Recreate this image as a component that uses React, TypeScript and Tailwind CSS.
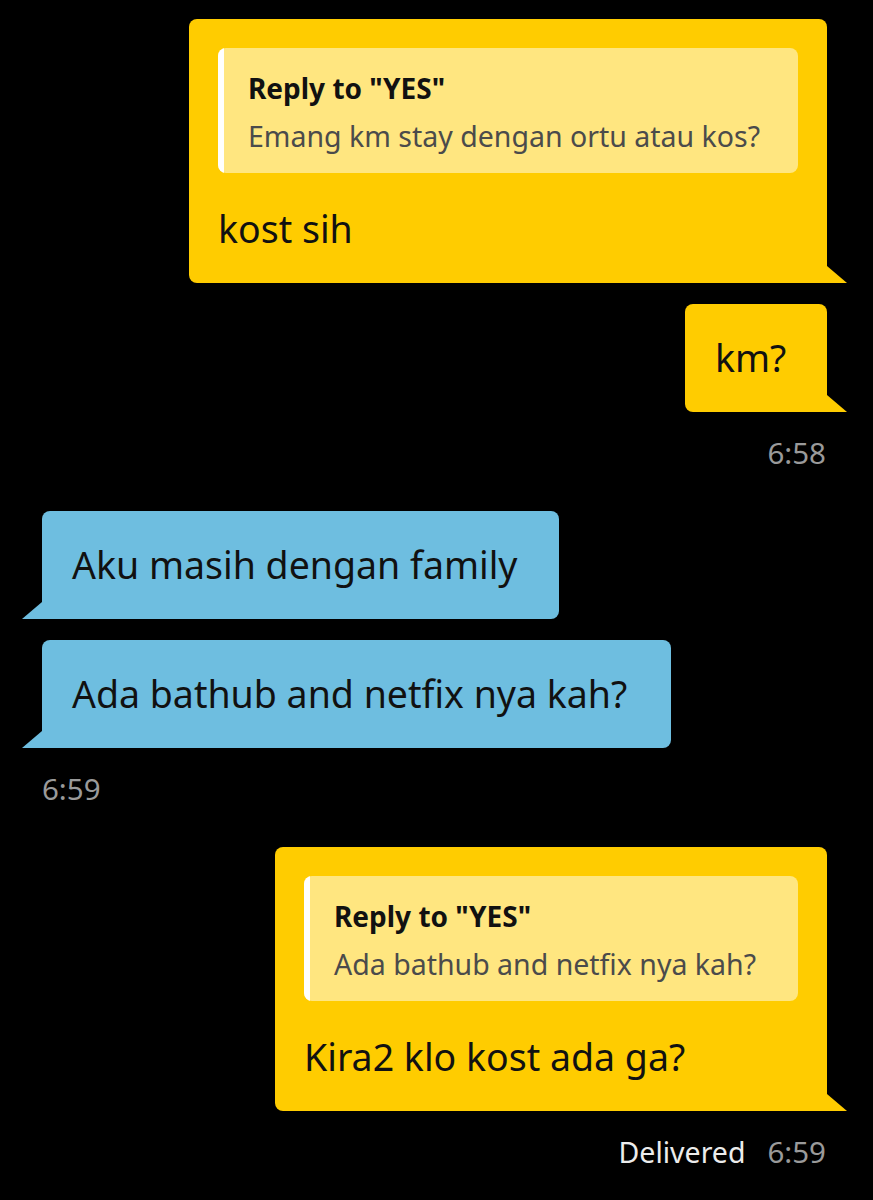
import React from "react";

type Side = "left" | "right";

const Tail = ({ side, color }: { side: Side; color: string }) => {
  if (side === "right") {
    return (
      <svg
        className="absolute bottom-0 right-[-20px]"
        width="20"
        height="17"
        viewBox="0 0 20 17"
      >
        <polygon points="0,0 20,17 0,17" fill={color} />
      </svg>
    );
  }
  return (
    <svg
      className="absolute bottom-0 left-[-20px]"
      width="20"
      height="17"
      viewBox="0 0 20 17"
    >
      <polygon points="20,0 0,17 20,17" fill={color} />
    </svg>
  );
};

const ReplyBox = ({ text }: { text: string }) => {
  return (
    <div className="flex rounded-[8px] bg-[#ffe680] overflow-hidden mb-[32px]">
      <div className="w-[6px] bg-white" />
      <div className="pl-[24px] pr-[30px] pt-[22px] pb-[19px]">
        <p className="text-[28px] leading-[36px] font-bold text-[#111]">
          Reply to "YES"
        </p>
        <p className="text-[28.5px] leading-[36px] mt-[12px] text-[#4b4b4b]">
          {text}
        </p>
      </div>
    </div>
  );
};

export default function App() {
  const font = { fontFamily: '"Noto Sans", "Open Sans", sans-serif' };
  return (
    <div
      className="bg-black min-h-[1200px] w-[873px] pt-[19px] flex flex-col"
      style={font}
    >
      {/* reply: kost sih */}
      <div className="flex justify-end pr-[46px]">
        <div className="relative w-[638px] bg-[#ffcc00] rounded-[8px] rounded-br-none px-[29px] pt-[29px] pb-[30px]">
          <ReplyBox text="Emang km stay dengan ortu atau kos?" />
          <p className="text-[37.5px] leading-[48px] text-[#111]">kost sih</p>
          <Tail side="right" color="#ffcc00" />
        </div>
      </div>

      <div className="flex justify-end pr-[46px] mt-[21px]">
        <div className="relative w-[142px] bg-[#ffcc00] rounded-[8px] rounded-br-none px-[30px] py-[30px]">
          <p className="text-[37.5px] leading-[48px] text-[#111]">km?</p>
          <Tail side="right" color="#ffcc00" />
        </div>
      </div>
      <div className="flex justify-end pr-[47px] mt-[23px]">
        <span className="text-[29.5px] leading-[36px] text-[#9a9a9a]">6:58</span>
      </div>

      {/* incoming */}
      <div className="flex pl-[42px] mt-[40px]">
        <div className="relative w-[517px] bg-[#6ebee0] rounded-[8px] rounded-bl-none px-[30px] py-[30px]">
          <p className="text-[37.5px] leading-[48px] text-[#111]">
            Aku masih dengan family
          </p>
          <Tail side="left" color="#6ebee0" />
        </div>
      </div>
      <div className="flex pl-[42px] mt-[21px]">
        <div className="relative w-[629px] bg-[#6ebee0] rounded-[8px] rounded-bl-none px-[30px] py-[30px]">
          <p className="text-[37.5px] leading-[48px] text-[#111]">
            Ada bathub and netfix nya kah?
          </p>
          <Tail side="left" color="#6ebee0" />
        </div>
      </div>
      <div className="flex pl-[42px] mt-[23px]">
        <span className="text-[29.5px] leading-[36px] text-[#9a9a9a]">6:59</span>
      </div>

      {/* reply: Kira2 */}
      <div className="flex justify-end pr-[46px] mt-[40px]">
        <div className="relative w-[552px] bg-[#ffcc00] rounded-[8px] rounded-br-none px-[29px] pt-[29px] pb-[30px]">
          <ReplyBox text="Ada bathub and netfix nya kah?" />
          <p className="text-[37.5px] leading-[48px] text-[#111]">
            Kira2 klo kost ada ga?
          </p>
          <Tail side="right" color="#ffcc00" />
        </div>
      </div>
      <div className="flex justify-end items-center gap-[22px] pr-[47px] mt-[23px]">
        <span className="text-[28.5px] leading-[36px] text-[#ececec]">
          Delivered
        </span>
        <span className="text-[29.5px] leading-[36px] text-[#9a9a9a]">6:59</span>
      </div>
    </div>
  );
}
